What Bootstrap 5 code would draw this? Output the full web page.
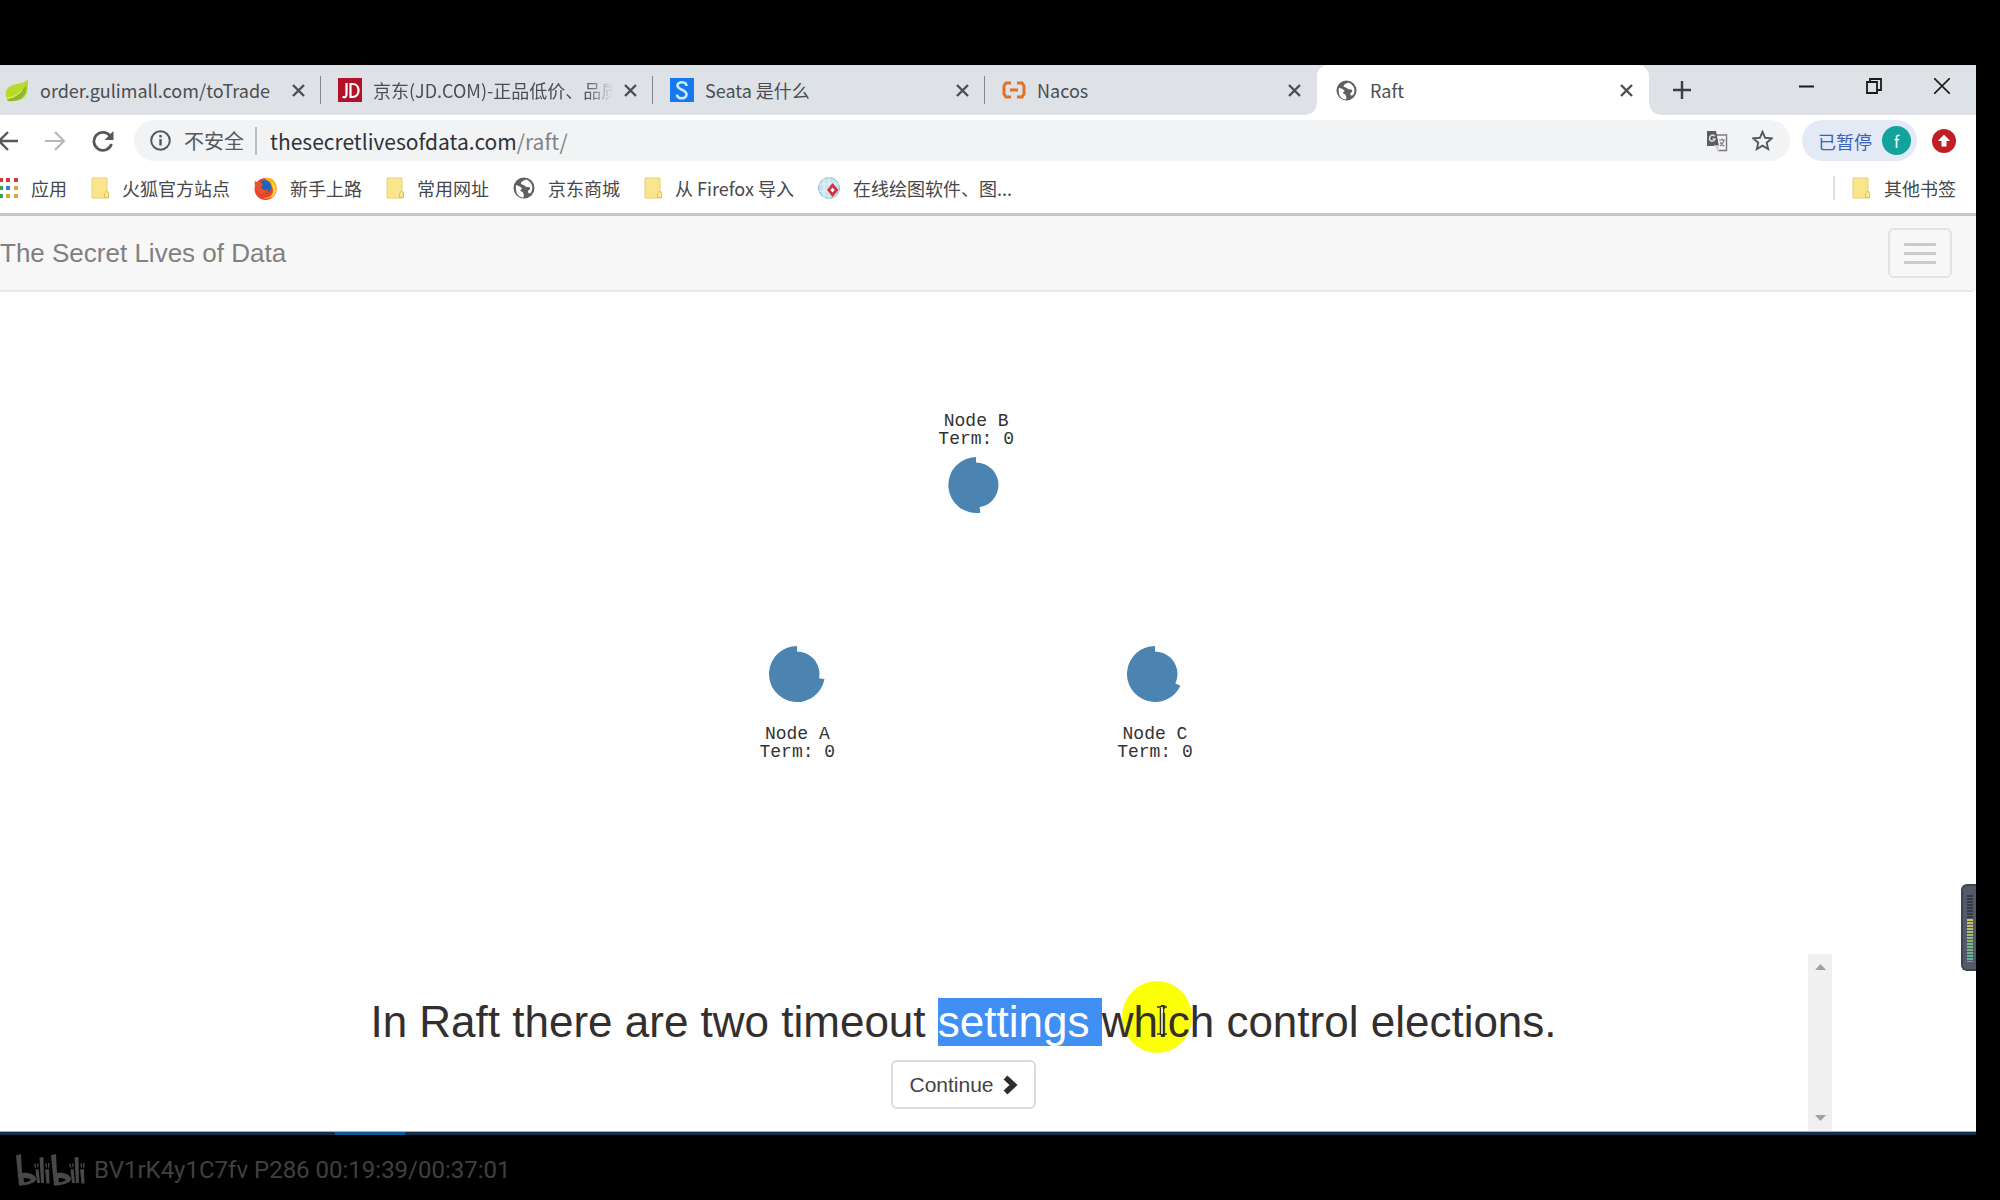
<!DOCTYPE html>
<html lang="zh-CN">
<head>
<meta charset="utf-8">
<meta name="viewport" content="width=device-width, initial-scale=1">
<title>Raft</title>
<link rel="stylesheet" href="https://cdn.jsdelivr.net/npm/bootstrap@5.3.0/dist/css/bootstrap.min.css">
<style>
  body { background: #000; font-family: "Noto Sans CJK SC", sans-serif; color: #4b4e52; line-height: 24px; }
  .player { min-height: 100vh; padding-top: 65px; }
  .browser { margin-right: 24px; background: #fefefe; overflow: hidden; }
  .browser svg, .watermark svg { display: block; flex: none; }
  .plain-btn { border: 0; background: none; padding: 0; color: inherit; flex: none; }

  .tabstrip { background: #dee1e5; height: 50px; font-size: 18px; }
  .browser-tab { width: 332px; padding: 0 16px 0 17px; gap: 11px; position: relative; height: 50px; }
  .browser-tab:first-child { width: 321px; padding-left: 5px; }
  .browser-tab a { color: #4b4e52; flex: 1; min-width: 0; overflow: hidden; white-space: nowrap; text-decoration: none; }
  .browser-tab .fade-end { -webkit-mask-image: linear-gradient(to right, #000 88%, transparent); mask-image: linear-gradient(to right, #000 88%, transparent); }
  .divided::after { content: ""; position: absolute; right: 0; top: 11px; height: 28px; width: 1px; background: #82868a; }
  .current-tab { background: #fff; border-radius: 11px 11px 0 0; padding: 0 16px 0 19px; gap: 13px; }
  .current-tab::before, .current-tab::after { content: ""; position: absolute; bottom: 0; width: 11px; height: 11px; }
  .current-tab::before { left: -11px; background: radial-gradient(circle at 0 0, transparent 10px, #fff 11px); }
  .current-tab::after { right: -11px; background: radial-gradient(circle at 100% 0, transparent 10px, #fff 11px); }
  .new-tab { margin-left: 24px; }
  .window-buttons { gap: 52px; padding: 0 26px 8px 0; color: #1b1b1b; }

  .toolbar { background: #fff; padding: 5px 20px 4px 0; color: #55585c; }
  .nav-buttons { gap: 27px; width: 134px; }
  .omnibox { background: #f1f3f5; border-radius: 21px; height: 41px; padding: 0 17px 0 16px; font-size: 20px; }
  .omnibox .info-mark { margin-right: 13px; }
  .omnibox .url-part { color: #303235; border-left: 2px solid #bcbfc2; font-size: 21px; line-height: 28px; padding-left: 13px; margin-left: 11px; white-space: nowrap; }
  .omnibox .url-part span { color: #808387; }
  .profile-chip { background: #e3eaf6; border-radius: 21px; height: 41px; padding: 0 6px 0 16px; margin: 0 15px 0 12px; color: #3862ba; font-size: 18px; gap: 10px; }
  .avatar-dot { width: 29px; height: 29px; border-radius: 50%; background: #14a39c; color: #fff; font-size: 16px; }

  .bookmarks { background: #fff; height: 51px; font-size: 18px; border-bottom: 3px solid #c6c7c7; padding: 0 20px 2px 0; gap: 24px; }
  .bookmarks a { color: #46484b; text-decoration: none; gap: 13px; white-space: nowrap; }
  .bookmarks .other-marks { border-left: 2px solid #dedfe1; padding-left: 17px; gap: 14px; }

  .site-nav { background: #f7f7f7; border-bottom: 2px solid #e9e9e9; padding: 12px 24px 12px 0; font-family: "Liberation Sans", sans-serif; border-radius: 0 0 5px 0; }
  .site-nav .navbar-brand { font-size: 26px; line-height: 32px; color: #808080; padding: 0; margin: 0; }
  .site-nav .menu-toggle { border: 2px solid #e3e3e3; border-radius: 6px; width: 64px; height: 50px; gap: 6px; }
  .menu-toggle span { width: 32px; height: 3px; background: #cacaca; border-radius: 1px; }

  .stage { position: relative; flex: 1; min-height: 560px; }
  .raft-node { position: absolute; transform: translate(-50%, -50%); }
  .raft-node svg { fill: #4c84b1; }
  .node-b { left: 49.4%; top: 29.2%; }
  .node-a { left: 40.35%; top: 57.7%; }
  .node-c { left: 58.45%; top: 57.7%; }
  .node-label { position: absolute; left: 50%; transform: translateX(-50%); text-align: center; white-space: nowrap; font: 18px/18px "Liberation Mono", monospace; color: #333; top: 79px; }
  .node-b .node-label { top: -45px; }

  .caption-panel { margin: 0 144px; font-family: "Liberation Sans", sans-serif; }
  .caption-body { padding: 44px 0 22px; margin-left: -25px; }
  .caption-body h1 { font-size: 44px; line-height: 48px; font-weight: 400; color: #332f2e; margin: 0 0 14px; }
  .picked { background: #3f8ff5; color: #fff; display: inline-block; white-space: pre; height: 48px; }
  .pointed { position: relative; z-index: 0; }
  .pointer-halo { position: absolute; z-index: -1; width: 70px; height: 72px; left: 20px; top: -16px; border-radius: 50%; background: #fbff08; }
  .pointer-beam { position: absolute; left: 54px; top: 7px; }
  .next-btn { font-size: 21px; line-height: 29px; padding: 8px 16px; border: 2px solid #dcdcdc; border-radius: 6px; background: #fff; color: #444; gap: 9px; }
  .scroll-track { width: 24px; background: #f0f0f0; padding: 10px 0; }
  .level-meter { position: absolute; right: 0; bottom: -17px; width: 15px; height: 87px; background: #555a68; border: 2px solid #3f444f; border-right: 0; border-radius: 6px 0 0 6px; padding: 8px 3px 8px 4px; }
  .taskbar-edge { height: 4px; background: #12304a; border-top: 1px solid #9fb1b9; padding-left: 335px; }
  .taskbar-edge div { height: 3px; width: 70px; background: #0d5c98; }
  .watermark { height: 65px; padding: 5px 16px 0; gap: 9px; color: #404040; font: 24px/30px Roboto, sans-serif; }
</style>
</head>
<body>
<svg class="d-none" aria-hidden="true">
  <symbol id="cross" viewBox="0 0 13 13"><path d="M1 1l11 11M12 1L1 12" stroke="#4c4f52" stroke-width="2.4" fill="none"/></symbol>
  <symbol id="globe" viewBox="0 0 22 22"><circle cx="11" cy="11" r="10.5" fill="#5e6063"/><path d="M3 8l4 1.500 2 2-2 2 3 2 1 3.500-1 1.500C5 20 2 15.500 3 8zM13 2.500c-2 1-4.500 1.500-5 3.500s2.500 1 4 3 4.500 0 5 2-2.500 2-2 4 2.500 1.500 3 .5c3-4.500 1-11-5-13z" fill="#fff"/></symbol>
  <symbol id="folder" viewBox="0 0 18 22"><path d="M1 1h15v13l1.500 1.500V21H1z" fill="#fae48c" stroke="#e5cf78"/><path d="M13.500 20.500v-4l2-2.500 2 2v4.500z" fill="#fbe994" stroke="#dcc15b"/></symbol>
</svg>

<div class="player d-flex flex-column">
  <main class="browser d-flex flex-column flex-grow-1">

    <div class="tabstrip d-flex">
      <div class="browser-tab divided d-flex align-items-center">
        <svg width="24" height="24" viewBox="0 0 24 24"><path d="M23 1C19 7 5 4 1 13c-1 4 0 8 2 10 9 1 17-1 19-9 1-4 1-9 1-13z" fill="#b9da2c"/><path d="M2 22C10 19 16 16 21 7c2 10-5 17-18 16z" fill="#8fb92b"/><path d="M1 20c8 0 13-4 16-8" stroke="#e2efa1" fill="none"/></svg>
        <a href="#">order.gulimall.com/toTrade</a>
        <button class="plain-btn" aria-label="关闭"><svg width="13" height="13"><use href="#cross"/></svg></button>
      </div>
      <div class="browser-tab divided d-flex align-items-center">
        <svg width="24" height="24" viewBox="0 0 24 24"><path fill="#b2112a" d="M0 0h24v24H0z"/><path d="M8.500 5v11c0 3-1 3.500-4 3M12.500 6v13h2c8 0 8-13 0-13z" fill="none" stroke="#fff" stroke-width="2.200"/></svg>
        <a class="fade-end" href="#">京东(JD.COM)-正品低价、品质</a>
        <button class="plain-btn" aria-label="关闭"><svg width="13" height="13"><use href="#cross"/></svg></button>
      </div>
      <div class="browser-tab divided d-flex align-items-center">
        <svg width="24" height="24" viewBox="0 0 24 24"><path fill="#1677ee" d="M0 0h24v24H0z"/><path d="M16.500 8c0-5-9-5-9-.5 0 5 9 3.500 9 9 0 5-9.500 5-9.500 0" fill="none" stroke="#c8eaff" stroke-width="2.600"/></svg>
        <a href="#">Seata 是什么</a>
        <button class="plain-btn" aria-label="关闭"><svg width="13" height="13"><use href="#cross"/></svg></button>
      </div>
      <div class="browser-tab d-flex align-items-center">
        <svg width="24" height="24" viewBox="0 0 24 24"><path d="M9 5H4L2 8v8l2 3h5M15 5h5l2 3v8l-2 3h-5M8 12h8" fill="none" stroke="#e0702f" stroke-width="3"/></svg>
        <a href="#">Nacos</a>
        <button class="plain-btn" aria-label="关闭"><svg width="13" height="13"><use href="#cross"/></svg></button>
      </div>
      <div class="browser-tab current-tab d-flex align-items-center">
        <svg width="21" height="21"><use href="#globe"/></svg>
        <a href="#">Raft</a>
        <button class="plain-btn" aria-label="关闭"><svg width="13" height="13"><use href="#cross"/></svg></button>
      </div>
      <button class="plain-btn new-tab" aria-label="新标签页"><svg width="18" height="18" viewBox="0 0 18 18"><path d="M9 0v18M0 9h18" stroke="#3c3f42" stroke-width="2.400"/></svg></button>
      <div class="window-buttons d-flex align-items-center ms-auto">
        <button class="plain-btn" aria-label="最小化"><svg width="15" height="16"><path d="M0 8.500h15" stroke="#1b1b1b" stroke-width="2"/></svg></button>
        <button class="plain-btn" aria-label="还原"><svg width="16" height="16" fill="none" stroke="#1b1b1b" stroke-width="1.800"><path d="M1 4h10v11H1zM4 4V1h11v11h-4"/></svg></button>
        <button class="plain-btn" aria-label="关闭窗口"><svg width="16" height="16"><path d="M0 0l16 16M16 0L0 16" stroke="#1b1b1b" stroke-width="1.600"/></svg></button>
      </div>
    </div>

    <div class="toolbar d-flex align-items-center">
      <div class="nav-buttons d-flex align-items-center">
        <button class="plain-btn" aria-label="后退"><svg width="18" height="20" viewBox="0 0 18 20" fill="none" stroke="#55585c" stroke-width="2.400"><path d="M18 10H0M8 1l-9 9 9 9"/></svg></button>
        <button class="plain-btn" aria-label="前进"><svg width="20" height="20" viewBox="0 0 20 20" fill="none" stroke="#b5b7b9" stroke-width="2.200"><path d="M0 10h19M10 1l9 9-9 9"/></svg></button>
        <button class="plain-btn" aria-label="刷新"><svg width="22" height="22" viewBox="0 0 22 22"><path d="M18.500 6.500A9 9 0 1 0 19.500 14" fill="none" stroke="#55585c" stroke-width="2.700"/><path d="M21.500 1v9h-9z" fill="#55585c"/></svg></button>
      </div>
      <div class="omnibox d-flex align-items-center flex-grow-1">
        <svg class="info-mark" width="21" height="21" viewBox="0 0 21 21"><circle cx="10.500" cy="10.500" r="9.300" fill="none" stroke="#55585c" stroke-width="2"/><path d="M10.500 9v6.500M10.500 5v2.400" stroke="#55585c" stroke-width="2.400"/></svg>
        <span class="text-nowrap">不安全</span>
        <div class="url-part flex-grow-1">thesecretlivesofdata.com<span>/raft/</span></div>
        <button class="plain-btn me-4" aria-label="翻译"><svg width="22" height="22" viewBox="0 0 22 22"><path d="M10 5h10.500v15.500H12z" fill="#f6f6f6" stroke="#77797c" stroke-width="1.400"/><path d="M1 1h9l3 15H1z" fill="#5b5d60"/><path d="M9 6.200C6.500 4 3.500 5.500 3.500 8.500S8 12.500 9 9H6.500M9 16l3 4.500V16z" fill="none" stroke="#dcdcdc" stroke-width="1.500"/><path d="M13 10h6M16 8.500V10M18 10c-.5 3-2.500 5-4 6M14.500 12c.5 2 2 3.500 4 4" fill="none" stroke="#77797c" stroke-width="1.200"/></svg></button>
        <button class="plain-btn" aria-label="收藏"><svg width="21" height="21" viewBox="0 0 21 21"><path d="M10.500 1.800l2.600 6 6.500.6-4.900 4.300 1.500 6.400-5.700-3.400-5.700 3.400 1.500-6.400-4.900-4.300 6.500-.6z" fill="none" stroke="#55585c" stroke-width="1.900"/></svg></button>
      </div>
      <button class="plain-btn profile-chip d-flex align-items-center">已暂停<span class="avatar-dot d-flex align-items-center justify-content-center">f</span></button>
      <button class="plain-btn" aria-label="更新"><svg width="24" height="24" viewBox="0 0 24 24"><circle cx="12" cy="12" r="12" fill="#c11f26"/><path d="M12 5.500l6 6.500h-3.500v5.500h-5V12H6z" fill="#fff"/></svg></button>
    </div>

    <nav class="bookmarks d-flex align-items-center" aria-label="书签">
      <a class="d-flex align-items-center" href="#"><svg width="18" height="20" viewBox="0 0 18 20"><path d="M0 0h3v4H0zM6 0h4v4H6zM14 0h4v4h-4z" fill="#cf3d38"/><path d="M0 8h3v4H0z" fill="#3ba35a"/><path d="M6 8h4v4H6z" fill="#3182dc"/><path d="M14 8h4v4h-4zM6 16h4v4H6zM14 16h4v4h-4z" fill="#e0a537"/><path d="M0 16h3v4H0z" fill="#3ba35a"/></svg>应用</a>
      <a class="d-flex align-items-center" href="#"><svg width="18" height="22"><use href="#folder"/></svg>火狐官方站点</a>
      <a class="d-flex align-items-center" href="#"><svg width="23" height="23" viewBox="0 0 23 23"><circle cx="11.500" cy="12" r="11" fill="#e8442c"/><path d="M11 1c7-2 13 5 11.500 12S14 23 9 21c8 0 12-5 9-11-2-4-6-5-7-9z" fill="#ffb31c"/><path d="M17 4c6 5 6 13 0 17 3-5 3-10 0-17z" fill="#ffdf3a"/><circle cx="11" cy="9.500" r="6.500" fill="#2763b5"/><path d="M1 4c1 1 2 1 4 1 2 0 4 2 3.500 4-2 0-2 2 0 3 2 2 5 1 6 0-1 5-7 6-10 3C1 12 0 8 1 4z" fill="#e9532b"/></svg>新手上路</a>
      <a class="d-flex align-items-center" href="#"><svg width="18" height="22"><use href="#folder"/></svg>常用网址</a>
      <a class="d-flex align-items-center" href="#"><svg width="22" height="22"><use href="#globe"/></svg>京东商城</a>
      <a class="d-flex align-items-center" href="#"><svg width="18" height="22"><use href="#folder"/></svg>从 Firefox 导入</a>
      <a class="d-flex align-items-center" href="#"><svg width="22" height="22" viewBox="0 0 22 22"><circle cx="11" cy="11" r="10.500" fill="#c9e4ec" stroke="#8fbccb"/><path d="M6 1v20M11 0v22M1 7h20M1 14h20" stroke="#e4f3f6"/><path d="M14.500 6l6 7-6 7-5.500-7z" fill="#d12f3d"/><path d="M14.500 10.500l2.200 2.500-2.200 2.500-2.200-2.500z" fill="#fff"/></svg>在线绘图软件、图...</a>
      <a class="other-marks d-flex align-items-center ms-auto" href="#"><svg width="18" height="22"><use href="#folder"/></svg>其他书签</a>
    </nav>

    <nav class="site-nav navbar d-flex justify-content-between">
      <a class="navbar-brand" href="#">The Secret Lives of Data</a>
      <button class="plain-btn menu-toggle d-flex flex-column align-items-center justify-content-center" aria-label="Menu"><span></span><span></span><span></span></button>
    </nav>

    <section class="stage" aria-label="Raft cluster">
      <div class="raft-node node-b">
        <svg width="56" height="56" viewBox="-28 -28 56 56"><circle r="22.500"/><path d="M0 0V-28A28 28 0 1 0 4.400 27.700z"/></svg>
        <div class="node-label">Node B<br>Term: 0</div>
      </div>
      <div class="raft-node node-a">
        <svg width="56" height="56" viewBox="-28 -28 56 56"><circle r="22.500"/><path d="M0 0V-28A28 28 0 1 0 27.500 5.300z"/></svg>
        <div class="node-label">Node A<br>Term: 0</div>
      </div>
      <div class="raft-node node-c">
        <svg width="56" height="56" viewBox="-28 -28 56 56"><circle r="22.500"/><path d="M0 0V-28A28 28 0 1 0 25.400 11.800z"/></svg>
        <div class="node-label">Node C<br>Term: 0</div>
      </div>
      <div class="level-meter">
        <svg width="6" height="68" viewBox="0 0 6 68"><defs><linearGradient id="lv" x2="0" y2="1"><stop offset="0" stop-color="#d3c667"/><stop offset=".5" stop-color="#8fb873"/><stop offset="1" stop-color="#4fb3a5"/></linearGradient></defs><path fill="#363a47" d="M0 0h6v24H0z"/><path fill="url(#lv)" d="M0 24h6v44H0z"/><path d="M3 0v68" stroke="#555a68" stroke-width="6" stroke-dasharray="1 2"/></svg>
      </div>
    </section>

    <section class="caption-panel d-flex">
      <div class="caption-body flex-grow-1 text-center">
        <h1>In Raft there are two timeout <span class="picked">settings </span><span class="pointed">which<i class="pointer-halo"></i><svg class="pointer-beam" width="12" height="34" viewBox="0 0 12 34"><path d="M1 3h3l2-1 2 1h3M1 30h3l2 1 2-1h3M4.500 4v26M7.500 4v26" fill="none" stroke="#33350a" stroke-width="1.500"/><path d="M6 3v27" stroke="#fff" stroke-width="1.500"/></svg></span> control elections.</h1>
        <button class="next-btn btn d-inline-flex align-items-center">Continue<svg width="15" height="20" viewBox="0 0 15 20"><path d="M2.500 2.500L10.500 10l-8 7.500" fill="none" stroke="#2d2d2d" stroke-width="5.500"/></svg></button>
      </div>
      <div class="scroll-track d-flex flex-column justify-content-between align-items-center">
        <svg width="11" height="6"><path d="M0 6l5.500-6L11 6z" fill="#a0a0a0"/></svg>
        <svg width="11" height="6"><path d="M0 0l5.500 6L11 0z" fill="#a0a0a0"/></svg>
      </div>
    </section>
    <div class="taskbar-edge"><div></div></div>
  </main>

  <footer class="watermark d-flex align-items-center">
    <svg width="69" height="32" viewBox="0 0 69 32" role="img" aria-label="bilibili" fill="#484848"><g id="bili"><path fill-rule="evenodd" d="M0 1.500L5 0l1 19c7-1 14 2 14 6 0 4-9 6.500-17 6.500zM7.500 24l.5 4.500c3-.5 6-1.500 7-3-2-1-4.500-1.500-7.500-1.500z"/><path d="M19.500 15.500l3-.5 1.500 14h-3zM23.500 3.500l4-.5.5 26h-3zM29 15.500l4-.5.5 14.500h-3zM18 10l1.500-.5.8 4-1.300.3zM21 9.500l1.500-.3v4l-1 .3zM29.500 9.500h1.500v4h-1.200zM32 9h1.500v4.500H32z"/></g><use href="#bili" x="35"/></svg>
    <span>BV1rK4y1C7fv P286 00:19:39/00:37:01</span>
  </footer>
</div>
<script src="https://cdn.jsdelivr.net/npm/bootstrap@5.3.0/dist/js/bootstrap.bundle.min.js"></script>
</body>
</html>
